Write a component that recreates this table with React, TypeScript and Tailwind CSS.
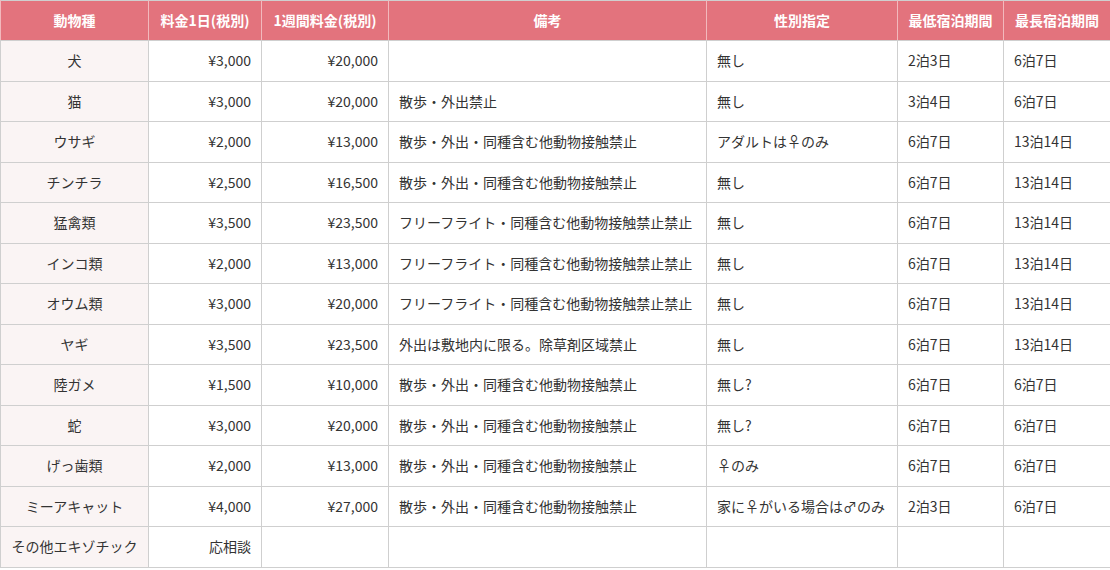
const headers = ["動物種", "料金1日(税別)", "1週間料金(税別)", "備考", "性別指定", "最低宿泊期間", "最長宿泊期間"];
const widths = ["w-[148px]", "w-[113px]", "w-[127px]", "w-[318px]", "w-[191px]", "w-[106px]", "w-[107px]"];

const NOTE_A = "散歩・外出・同種含む他動物接触禁止";
const NOTE_B = "フリーフライト・同種含む他動物接触禁止禁止";

type Row = [string, string, string, string, string, string, string];

const rows: Row[] = [
  ["犬", "¥3,000", "¥20,000", "", "無し", "2泊3日", "6泊7日"],
  ["猫", "¥3,000", "¥20,000", "散歩・外出禁止", "無し", "3泊4日", "6泊7日"],
  ["ウサギ", "¥2,000", "¥13,000", NOTE_A, "アダルトは♀のみ", "6泊7日", "13泊14日"],
  ["チンチラ", "¥2,500", "¥16,500", NOTE_A, "無し", "6泊7日", "13泊14日"],
  ["猛禽類", "¥3,500", "¥23,500", NOTE_B, "無し", "6泊7日", "13泊14日"],
  ["インコ類", "¥2,000", "¥13,000", NOTE_B, "無し", "6泊7日", "13泊14日"],
  ["オウム類", "¥3,000", "¥20,000", NOTE_B, "無し", "6泊7日", "13泊14日"],
  ["ヤギ", "¥3,500", "¥23,500", "外出は敷地内に限る。除草剤区域禁止", "無し", "6泊7日", "13泊14日"],
  ["陸ガメ", "¥1,500", "¥10,000", NOTE_A, "無し?", "6泊7日", "6泊7日"],
  ["蛇", "¥3,000", "¥20,000", NOTE_A, "無し?", "6泊7日", "6泊7日"],
  ["げっ歯類", "¥2,000", "¥13,000", NOTE_A, "♀のみ", "6泊7日", "6泊7日"],
  ["ミーアキャット", "¥4,000", "¥27,000", NOTE_A, "家に♀がいる場合は♂のみ", "2泊3日", "6泊7日"],
];

export default function App() {
  return (
    <div
      className="w-[1110px] h-[570px] bg-white text-[14px] text-[#333]"
      style={{ fontFamily: '"Noto Sans CJK JP", "Noto Sans", sans-serif' }}
    >
      <table className="w-[1110px] table-fixed border-collapse border border-[#cfcfcf]">
        <thead>
          <tr className="bg-[#e3737d] text-white">
            {headers.map((h, i) => (
              <th
                key={h}
                className={`${widths[i]} h-[40px] px-2 font-bold text-[14px] text-center border-x border-[#f2b9bd] border-b border-b-[#cfcfcf]`}
              >
                {h}
              </th>
            ))}
          </tr>
        </thead>
        <tbody>
          {rows.map((r) => (
            <tr key={r[0]}>
              <td className="h-[40.5px] bg-[#faf4f4] border border-[#cfcfcf] text-center px-2">{r[0]}</td>
              <td className="border border-[#cfcfcf] text-right px-[10px]">{r[1]}</td>
              <td className="border border-[#cfcfcf] text-right px-[10px]">{r[2]}</td>
              <td className="border border-[#cfcfcf] text-left px-[10px] whitespace-nowrap">{r[3]}</td>
              <td className="border border-[#cfcfcf] text-left px-[10px] whitespace-nowrap">{r[4]}</td>
              <td className="border border-[#cfcfcf] text-left px-[10px]">{r[5]}</td>
              <td className="border border-[#cfcfcf] text-left px-[10px]">{r[6]}</td>
            </tr>
          ))}
          <tr>
            <td className="h-[40.5px] bg-[#faf4f4] border border-[#cfcfcf] text-center px-2 whitespace-nowrap">その他エキゾチック</td>
            <td className="border border-[#cfcfcf] text-right px-[10px]">応相談</td>
            <td className="border border-[#cfcfcf]" />
            <td className="border border-[#cfcfcf]" />
            <td className="border border-[#cfcfcf]" />
            <td className="border border-[#cfcfcf]" />
            <td className="border border-[#cfcfcf]" />
          </tr>
        </tbody>
      </table>
    </div>
  );
}
